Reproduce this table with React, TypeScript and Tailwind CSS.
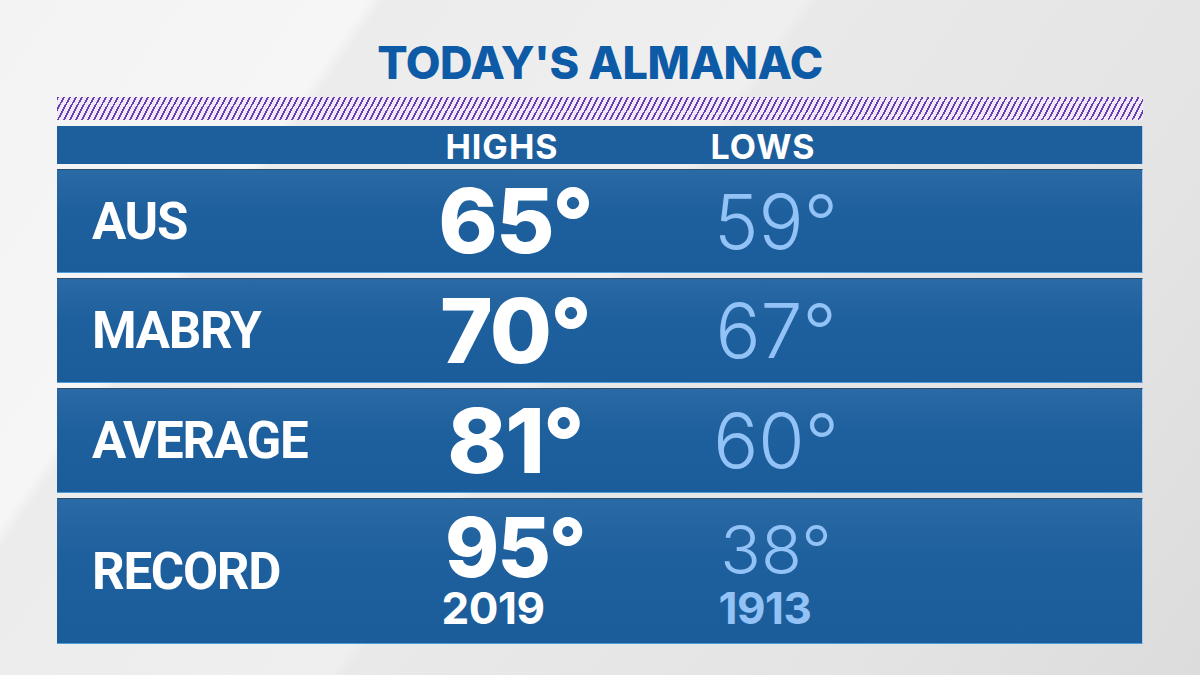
import React from 'react'

interface Row {
  label: string
  high: string
  low: string
  highYear?: string
  lowYear?: string
}

const rows: Row[] = [
  { label: 'AUS', high: '65', low: '59' },
  { label: 'MABRY', high: '70', low: '67' },
  { label: 'AVERAGE', high: '81', low: '60' },
  { label: 'RECORD', high: '95', low: '38', highYear: '2019', lowYear: '1913' },
]

const numFont = "font-['Inter','Noto_Sans',sans-serif]"

export default function App() {
  return (
    <div className="w-[1200px] h-[675px] overflow-hidden bg-[linear-gradient(125deg,#f3f3f3_0%,#f6f6f6_22%,#ececec_23%,#efefef_48%,#e9e9e9_49%,#e4e4e4_78%,#dcdcdc_100%)] px-[57px] flex flex-col">
      {/* title */}
      <div className="h-[97px] flex items-end justify-center pb-[12px]">
        <h1 className={`${numFont} text-[45px] leading-none font-extrabold tracking-[-0.01em] text-[#0d5aa7]`}>
          TODAY'S ALMANAC
        </h1>
      </div>

      {/* hatched band */}
      <div className="h-[23px] bg-[repeating-linear-gradient(118deg,#6a3db3_0px,#6a3db3_1.7px,#efe8f7_1.7px,#efe8f7_5.3px)]" />

      <div className="mt-[6px] flex flex-col gap-[5px]">
        {/* header row */}
        <div className="h-[38px] bg-[#1d5f9c] border-r border-[#a9cdee] flex items-center pl-[345px] text-white">
          <div className={`${numFont} w-[200px] text-center text-[34px] font-bold leading-none tracking-[0.03em] pt-[4px]`}>HIGHS</div>
          <div className="w-[61px]" />
          <div className={`${numFont} w-[200px] text-center text-[34px] font-bold leading-none tracking-[0.03em] pt-[4px]`}>LOWS</div>
        </div>

        {rows.map((r, i) => {
          const isRecord = !!r.highYear
          return (
            <div
              key={r.label}
              className={`${isRecord ? 'h-[146px]' : i === 0 ? 'h-[104px]' : 'h-[105px]'} bg-[linear-gradient(180deg,#2a6aa5_0%,#1e609d_40%,#1b5d9a_100%)] border-t border-[#2f4e6e] border-b border-b-[#4d9bdc] border-r border-r-[#a9cdee] flex items-center pl-[35px]`}
            >
              <div className="w-[323px] font-['Roboto',sans-serif] font-bold text-[51px] tracking-[-0.025em] text-white leading-none">
                {r.label}
              </div>

              <div className="w-[200px] flex flex-col items-center">
                <div className={`${numFont} font-extrabold text-white tracking-[-0.02em] ${isRecord ? 'text-[82px] leading-[0.75]' : 'text-[90px] leading-none'}`}>
                  {r.high}°
                </div>
                {r.highYear && (
                  <div className={`${numFont} font-bold text-white text-[44px] leading-[0.75] mt-[13px] mr-[44px] tracking-[-0.01em]`}>
                    {r.highYear}
                  </div>
                )}
              </div>

              <div className="w-[61px]" />

              <div className="w-[200px] flex flex-col items-center">
                <div className={`${numFont} font-light text-[#93c2f6] ${isRecord ? 'text-[67px] leading-[0.75] mt-[8px]' : 'text-[75px] leading-none'}`}>
                  {r.low}°
                </div>
                {r.lowYear && (
                  <div className={`${numFont} font-bold text-[#93c2f6] text-[44px] leading-[0.75] mt-[16px] mr-[22px] tracking-[-0.01em]`}>
                    {r.lowYear}
                  </div>
                )}
              </div>
            </div>
          )
        })}
      </div>
    </div>
  )
}
